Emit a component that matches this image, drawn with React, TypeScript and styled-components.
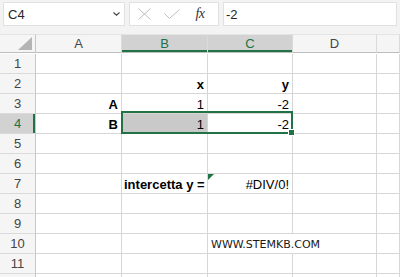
import React from 'react';
import styled, { createGlobalStyle } from 'styled-components';

const GREEN = '#217346';
const GRID = '#d6d6d6';

const GlobalStyle = createGlobalStyle`
    html, body {
        margin: 0;
        padding: 0;
        background: #ffffff;
    }
    body {
        font-family: "Liberation Sans", Arial, sans-serif;
    }
`;

const Window = styled.div`
    position: relative;
    width: 400px;
    height: 277px;
    overflow: hidden;
    background: #ffffff;
`;

const Toolbar = styled.div`
    display: flex;
    align-items: flex-start;
    gap: 4px;
    height: 34px;
    padding: 2px 3px 0 3px;
    box-sizing: border-box;
    background: #f3f3f3;
`;

const Box = styled.div<{ $width?: number; $grow?: boolean }>`
    display: flex;
    align-items: center;
    height: 24px;
    box-sizing: border-box;
    background: #ffffff;
    border: 1px solid #e1e1e1;
    width: ${({ $width }) => ($width ? `${$width}px` : 'auto')};
    flex: ${({ $grow }) => ($grow ? '1' : 'none')};
`;

const NameText = styled.span`
    flex: 1;
    padding-left: 4px;
    font-size: 13px;
    color: #262626;
`;

const Chevron = styled.svg`
    margin-right: 4px;
`;

const IconSlot = styled.div`
    display: flex;
    align-items: center;
    justify-content: center;
    width: 28px;
    height: 100%;
`;

const Fx = styled.span`
    font-family: "Liberation Serif", "Times New Roman", serif;
    font-style: italic;
    font-size: 14px;
    color: #333;
    letter-spacing: -0.5px;
`;

const FormulaText = styled.span`
    padding-left: 2px;
    font-size: 13px;
    color: #262626;
`;

const Sheet = styled.div`
    position: relative;
    display: grid;
    grid-template-columns: 36px 86px 86px 85px 84px 1fr;
    grid-auto-rows: 20px;
`;

const HeaderCell = styled.div<{ $selected?: boolean; $corner?: boolean }>`
    position: relative;
    display: flex;
    align-items: center;
    justify-content: center;
    height: 19px;
    box-sizing: border-box;
    border-top: 1px solid #e4e4e4;
    border-right: 1px solid ${({ $corner }) => ($corner ? '#c6c6c6' : '#dadada')};
    border-bottom: 1px solid #bdbdbd;
    background: ${({ $selected }) => ($selected ? '#d2d2d2' : '#f5f5f5')};
    color: ${({ $selected }) => ($selected ? GREEN : '#444444')};
    box-shadow: ${({ $selected }) => ($selected ? `inset 0 -2px 0 ${GREEN}` : 'none')};
    font-size: 13px;
`;

const CornerTriangle = styled.div`
    position: absolute;
    right: 3px;
    bottom: 2px;
    width: 0;
    height: 0;
    border-left: 14px solid transparent;
    border-bottom: 13px solid #b4b4b4;
`;

const RowHeader = styled.div<{ $selected?: boolean }>`
    display: flex;
    align-items: center;
    justify-content: center;
    box-sizing: border-box;
    border-right: 1px solid #c6c6c6;
    border-bottom: 1px solid #dadada;
    background: ${({ $selected }) => ($selected ? '#d2d2d2' : '#f5f5f5')};
    color: ${({ $selected }) => ($selected ? GREEN : '#444444')};
    box-shadow: ${({ $selected }) => ($selected ? `inset -2px 0 0 ${GREEN}` : 'none')};
    font-size: 13px;
`;

const Cell = styled.div<{ $align?: 'left' | 'right'; $bold?: boolean; $fill?: boolean; $overflow?: boolean; $web?: boolean }>`
    position: relative;
    display: flex;
    align-items: center;
    justify-content: ${({ $align }) => ($align === 'left' ? 'flex-start' : 'flex-end')};
    padding: 1px 3px 0 2px;
    box-sizing: border-box;
    border-right: 1px solid ${({ $overflow }) => ($overflow ? 'transparent' : GRID)};
    border-bottom: 1px solid ${GRID};
    background: ${({ $fill }) => ($fill ? '#c9c9c9' : '#ffffff')};
    font-family: ${({ $web }) => ($web ? '"DejaVu Sans", Verdana, sans-serif' : '"Liberation Sans", Arial, sans-serif')};
    font-size: ${({ $web }) => ($web ? '11px' : '13px')};
    font-weight: ${({ $bold }) => ($bold ? 700 : 400)};
    color: ${({ $web }) => ($web ? '#1a1a1a' : '#000000')};
    white-space: nowrap;
    overflow: visible;
    z-index: ${({ $overflow }) => ($overflow ? 1 : 0)};
    padding-left: ${({ $web }) => ($web ? '3px' : '2px')};
`;

const ErrorFlag = styled.div`
    position: absolute;
    left: 0;
    top: 0;
    width: 0;
    height: 0;
    border-top: 6px solid ${GREEN};
    border-right: 6px solid transparent;
`;

const Selection = styled.div`
    position: absolute;
    left: 121px;
    top: 77px;
    width: 172px;
    height: 23px;
    box-sizing: border-box;
    border: 2px solid ${GREEN};
    pointer-events: none;
    z-index: 2;
`;

const FillHandle = styled.div`
    position: absolute;
    right: -4px;
    bottom: -4px;
    width: 5px;
    height: 5px;
    background: ${GREEN};
    border: 1px solid #ffffff;
`;

type CellDef = {
    text?: string;
    align?: 'left' | 'right';
    bold?: boolean;
    fill?: boolean;
    overflow?: boolean;
    web?: boolean;
    flag?: boolean;
};

const columns = ['A', 'B', 'C', 'D', ''];
const selectedCols = ['B', 'C'];

const data: Record<number, Record<string, CellDef>> = {
    2: { B: { text: 'x', bold: true }, C: { text: 'y', bold: true } },
    3: { A: { text: 'A', bold: true }, B: { text: '1' }, C: { text: '-2' } },
    4: { A: { text: 'B', bold: true }, B: { text: '1', fill: true }, C: { text: '-2' } },
    7: { B: { text: 'intercetta y =', bold: true, align: 'left' }, C: { text: '#DIV/0!', flag: true } },
    10: { C: { text: 'WWW.STEMKB.COM', align: 'left', overflow: true, web: true } },
};

const rowNumbers = Array.from({ length: 12 }, (_, i) => i + 1);

export default function App() {
    return (
        <Window>
            <GlobalStyle />
            <Toolbar>
                <Box $width={122}>
                    <NameText>C4</NameText>
                    <Chevron width="7" height="4" viewBox="0 0 7 4">
                        <path d="M0.5 0.5 L3.5 3.2 L6.5 0.5" fill="none" stroke="#444" strokeWidth="1.1" />
                    </Chevron>
                </Box>
                <Box $width={90}>
                    <IconSlot>
                        <svg width="13" height="12" viewBox="0 0 13 12">
                            <path d="M0.5 0.5 L12.5 11.5 M12.5 0.5 L0.5 11.5" stroke="#bdbdbd" strokeWidth="1" fill="none" />
                        </svg>
                    </IconSlot>
                    <IconSlot>
                        <svg width="16" height="10" viewBox="0 0 16 10">
                            <path d="M0.5 4.5 L5.5 9.5 L15.5 0.5" stroke="#bdbdbd" strokeWidth="1" fill="none" />
                        </svg>
                    </IconSlot>
                    <IconSlot>
                        <Fx>fx</Fx>
                    </IconSlot>
                </Box>
                <Box $grow>
                    <FormulaText>-2</FormulaText>
                </Box>
            </Toolbar>
            <Sheet>
                <HeaderCell $corner>
                    <CornerTriangle />
                </HeaderCell>
                {columns.map((col, i) => (
                    <HeaderCell key={`h${i}`} $selected={selectedCols.includes(col)}>
                        {col}
                    </HeaderCell>
                ))}
                {rowNumbers.map((row) => (
                    <React.Fragment key={row}>
                        <RowHeader $selected={row === 4}>{row}</RowHeader>
                        {columns.map((col, i) => {
                            const def = data[row]?.[col] ?? {};
                            return (
                                <Cell
                                    key={`${row}-${i}`}
                                    $align={def.align}
                                    $bold={def.bold}
                                    $fill={def.fill}
                                    $overflow={def.overflow}
                                    $web={def.web}
                                >
                                    {def.flag && <ErrorFlag />}
                                    {def.text}
                                </Cell>
                            );
                        })}
                    </React.Fragment>
                ))}
                <Selection>
                    <FillHandle />
                </Selection>
            </Sheet>
        </Window>
    );
}
